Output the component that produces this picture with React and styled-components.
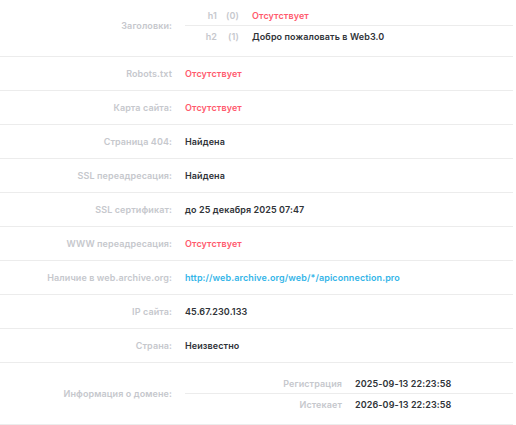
import React from "react"
import styled, { createGlobalStyle } from "styled-components"

const GlobalStyle = createGlobalStyle`
    body {
        margin: 0;
        background: #fff;
        font-family: Inter, "Open Sans", sans-serif;
    }
`

const Table = styled.div`
    width: 513px;
`

const Row = styled.div`
    display: grid;
    grid-template-columns: 172px 1fr;
    column-gap: 13px;
    align-items: center;
    min-height: 33px;
    padding: ${p => p.$pad || "0"};
    border-bottom: 1px solid #ececec;
`

const Label = styled.div`
    text-align: right;
    font-size: 9px;
    font-weight: 600;
    letter-spacing: 0.1px;
    color: #c6c8cd;
    white-space: nowrap;
`

const Value = styled.div`
    font-size: 9px;
    font-weight: 600;
    letter-spacing: 0.1px;
    color: ${p => (p.$tone === "bad" ? "#ff5a6e" : p.$tone === "link" ? "#35b5e8" : "#2f3338")};
    white-space: nowrap;
`

const SubList = styled.div`
    display: flex;
    flex-direction: column;
`

const SubRow = styled.div`
    display: grid;
    grid-template-columns: ${p => p.$cols};
    align-items: center;
    height: 20px;
    & + & {
        border-top: 1px solid #ececec;
    }
`

const Tag = styled.span`
    font-size: 9px;
    font-weight: 600;
    letter-spacing: 0.1px;
    color: #c6c8cd;
    text-align: right;
    padding-right: ${p => p.$gap || 0}px;
`

const headings = [
    { tag: "h1", count: "(0)", text: "Отсутствует", tone: "bad" },
    { tag: "h2", count: "(1)", text: "Добро пожаловать в Web3.0" },
]

const rows = [
    { label: "Robots.txt", value: "Отсутствует", tone: "bad" },
    { label: "Карта сайта:", value: "Отсутствует", tone: "bad" },
    { label: "Страница 404:", value: "Найдена" },
    { label: "SSL переадресация:", value: "Найдена" },
    { label: "SSL сертификат:", value: "до 25 декабря 2025 07:47" },
    { label: "WWW переадресация:", value: "Отсутствует", tone: "bad" },
    { label: "Наличие в web.archive.org:", value: "http://web.archive.org/web/*/apiconnection.pro", tone: "link" },
    { label: "IP сайта:", value: "45.67.230.133" },
    { label: "Страна:", value: "Неизвестно" },
]

const domain = [
    { label: "Регистрация", value: "2025-09-13 22:23:58" },
    { label: "Истекает", value: "2026-09-13 22:23:58" },
]

const App = () => {
    return (
        <>
            <GlobalStyle />
            <Table>
                <Row $pad="5px 0 10px">
                    <Label>Заголовки:</Label>
                    <SubList>
                        {headings.map(h => (
                            <SubRow key={h.tag} $cols="33px 21px 1fr">
                                <Tag $gap={1}>{h.tag}</Tag>
                                <Tag $gap={0}>{h.count}</Tag>
                                <Value $tone={h.tone} style={{ paddingLeft: 13 }}>{h.text}</Value>
                            </SubRow>
                        ))}
                    </SubList>
                </Row>
                {rows.map(r => (
                    <Row key={r.label}>
                        <Label>{r.label}</Label>
                        <Value $tone={r.tone}>{r.value}</Value>
                    </Row>
                ))}
                <Row $pad="10px 0 10px">
                    <Label>Информация о домене:</Label>
                    <SubList>
                        {domain.map(d => (
                            <SubRow key={d.label} $cols="170px 1fr">
                                <Tag $gap={13}>{d.label}</Tag>
                                <Value>{d.value}</Value>
                            </SubRow>
                        ))}
                    </SubList>
                </Row>
            </Table>
        </>
    )
}

export default App
